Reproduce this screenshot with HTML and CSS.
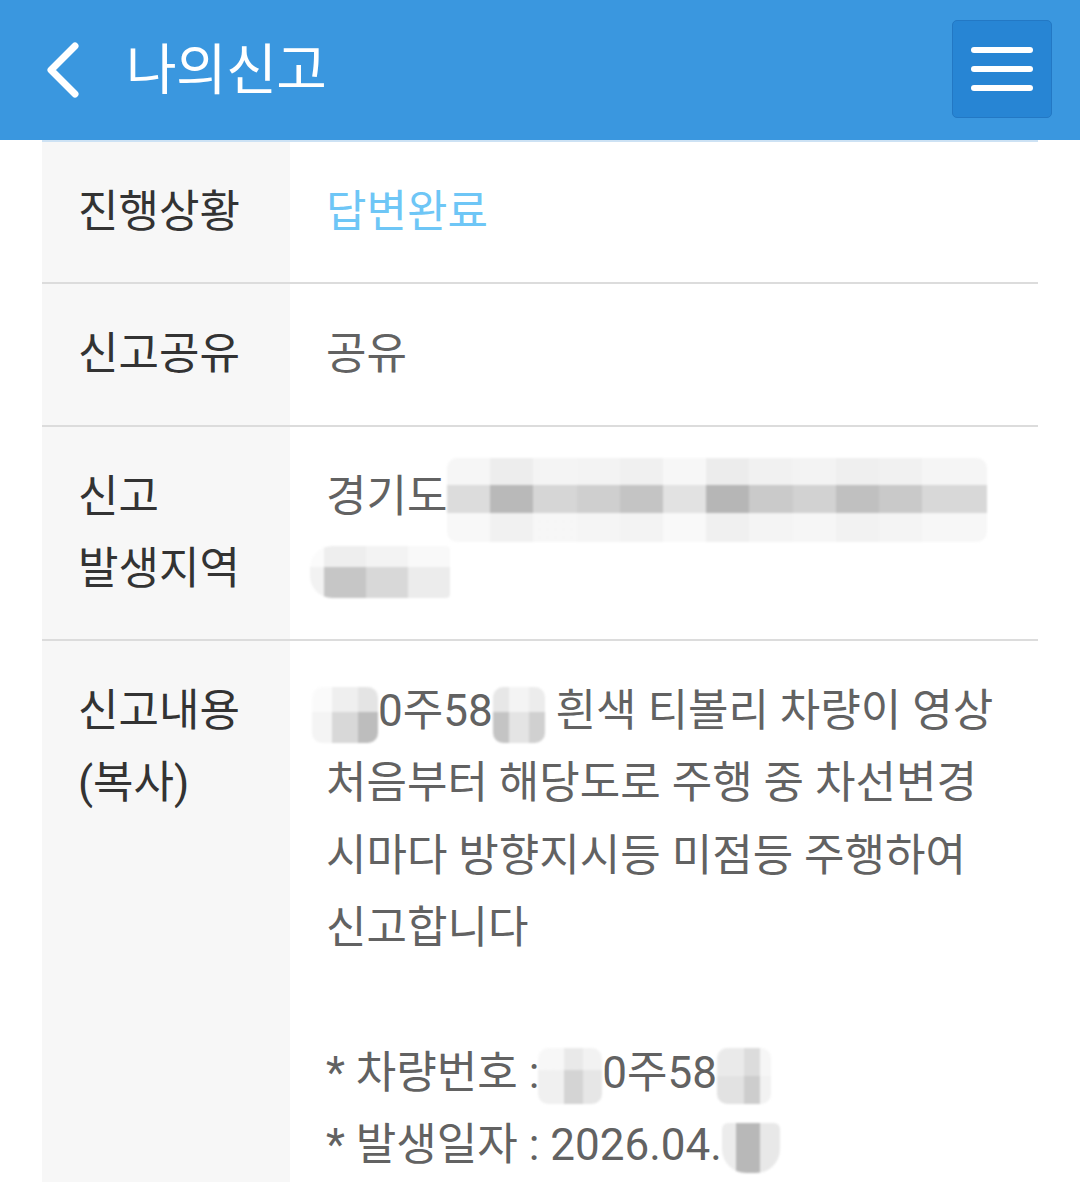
FILE: index.html
```html
<!doctype html>
<html lang="ko">

	<head>
		<meta charset="UTF-8">
		<title>나의신고</title>
		<link rel="stylesheet" href="styles.css">
	</head>

	<body>
		<!-- 상단 바 -->
		<div class="topbar">
			<a href="javascript:;" class="back">
				<svg width="40" height="60" viewBox="0 0 40 60">
					<polyline points="32,5 8,29 32,53" fill="none" stroke="#fff" stroke-width="7" stroke-linecap="round" stroke-linejoin="round" />
				</svg>
			</a>
			<h1 class="title">나의신고</h1>
			<a href="javascript:;" class="menu-btn">
				<span></span>
				<span></span>
				<span></span>
			</a>
		</div>

		<!-- 신고 상세 -->
		<table class="detail">
			<tr>
				<th>진행상황</th>
				<td class="state">답변완료</td>
			</tr>
			<tr>
				<th>신고공유</th>
				<td>공유</td>
			</tr>
			<tr>
				<th>신고<br>발생지역</th>
				<td>경기도<span class="mosaic addr1"></span><br><span class="mosaic addr2"></span></td>
			</tr>
			<tr>
				<th>신고내용<br>(복사)</th>
				<td>
					<span class="mosaic m1"></span>0주58<span class="mosaic m2"></span> 흰색 티볼리 차량이 영상<br>
					처음부터 해당도로 주행 중 차선변경<br>
					시마다 방향지시등 미점등 주행하여<br>
					신고합니다<br>
					<br>
					* 차량번호 : <span class="mosaic m3"></span>0주58<span class="mosaic m4"></span><br>
					* 발생일자 : 2026.04.<span class="mosaic m5"></span>
				</td>
			</tr>
		</table>
	</body>

</html>
```

FILE: styles.css
```css
body,
h1,
table,
th,
td {
	margin: 0;
	padding: 0;
}

body {
	background: #ffffff;
	font-family: "Roboto", "Noto Sans CJK KR", sans-serif;
}

.topbar {
	height: 140px;
	background-color: #3a97df;
	display: flex;
	align-items: center;
	padding-left: 43px;
	padding-right: 28px;
}

.topbar .back {
	display: block;
	width: 40px;
	height: 60px;
	margin-top: 2px;
}

.topbar .back svg {
	display: block;
}

.topbar .title {
	flex: 1;
	margin-left: 43px;
	color: #ffffff;
	font-size: 55px;
	font-weight: 400;
	letter-spacing: -0.5px;
	line-height: 60px;
}

.menu-btn {
	width: 98px;
	height: 96px;
	margin-bottom: 2px;
	border: 1px solid #2378c4;
	border-radius: 5px;
	background-color: #2785d4;
	display: flex;
	flex-direction: column;
	align-items: center;
	justify-content: center;
	gap: 13px;
}

.menu-btn span {
	display: block;
	width: 62px;
	height: 6px;
	border-radius: 3px;
	background: #ffffff;
}

.detail {
	width: 996px;
	margin: 0 42px;
	border-collapse: collapse;
	border-top: 2px solid #cde2f4;
}

.detail tr {
	border-bottom: 2px solid #dcdcdc;
}

.detail tr:last-child {
	border-bottom: 0;
}

.detail th,
.detail td {
	padding: 34px 36px;
	font-size: 44px;
	font-weight: 400;
	letter-spacing: 0;
	line-height: 72px;
	text-align: left;
	vertical-align: top;
}

.detail th {
	width: 176px;
	background-color: #f7f7f7;
	color: #333333;
}

.detail td {
	color: #626262;
	line-height: 72.3px;
}

.detail td.state {
	color: #6ec6f6;
}

/* 가림 처리 */
.mosaic {
	display: inline-block;
	vertical-align: middle;
	border-radius: 10px;
	filter: blur(1px);
	background:
		linear-gradient(180deg, rgba(255, 255, 255, .75) 0 32%, rgba(255, 255, 255, 0) 32% 66%, rgba(255, 255, 255, .8) 66% 100%),
		linear-gradient(90deg, #dcdcdc 0 8%, #b9b9b9 8% 16%, #d6d6d6 16% 24%, #cfcfcf 24% 32%, #c4c4c4 32% 40%, #e2e2e2 40% 48%, #b6b6b6 48% 56%, #cacaca 56% 64%, #d2d2d2 64% 72%, #c0c0c0 72% 80%, #c9c9c9 80% 88%, #d8d8d8 88% 100%);
}

.addr1 {
	width: 540px;
	height: 84px;
	margin: -10px 0 -10px 0;
}

.addr2 {
	width: 140px;
	height: 52px;
	margin-left: -16px;
	border-radius: 22px 4px 4px 22px;
	background:
		linear-gradient(180deg, rgba(255, 255, 255, .7) 0 40%, rgba(255, 255, 255, 0) 40% 100%),
		linear-gradient(90deg, #f2f2f2 0 10%, #c6c6c6 10% 40%, #d8d8d8 40% 70%, #ececec 70% 100%);
}

.m1 {
	width: 66px;
	height: 56px;
	margin-left: -14px;
	background:
		linear-gradient(180deg, rgba(255, 255, 255, .6) 0 45%, rgba(255, 255, 255, 0) 45% 100%),
		linear-gradient(90deg, #f4f4f4 0 30%, #d8d8d8 30% 70%, #bdbdbd 70% 100%);
}

.m2 {
	width: 52px;
	height: 56px;
	background:
		linear-gradient(180deg, rgba(255, 255, 255, .6) 0 45%, rgba(255, 255, 255, 0) 45% 100%),
		linear-gradient(90deg, #c4c4c4 0 30%, #e4e4e4 30% 70%, #d0d0d0 70% 100%);
}

.m3 {
	width: 64px;
	height: 56px;
	margin-left: -12px;
	background:
		linear-gradient(180deg, rgba(255, 255, 255, .5) 0 40%, rgba(255, 255, 255, 0) 40% 100%),
		linear-gradient(90deg, #f0f0f0 0 40%, #d4d4d4 40% 70%, #e6e6e6 70% 100%);
}

.m4 {
	width: 54px;
	height: 56px;
	background:
		linear-gradient(180deg, rgba(255, 255, 255, .3) 0 50%, rgba(255, 255, 255, 0) 50% 100%),
		linear-gradient(90deg, #e2e2e2 0 50%, #cdcdcd 50% 80%, #f2f2f2 80% 100%);
}

.m5 {
	width: 58px;
	height: 50px;
	border-radius: 6px 6px 24px 24px;
	background:
		linear-gradient(90deg, #ececec 0 25%, #b8b8b8 25% 65%, #e8e8e8 65% 100%);
}
```
